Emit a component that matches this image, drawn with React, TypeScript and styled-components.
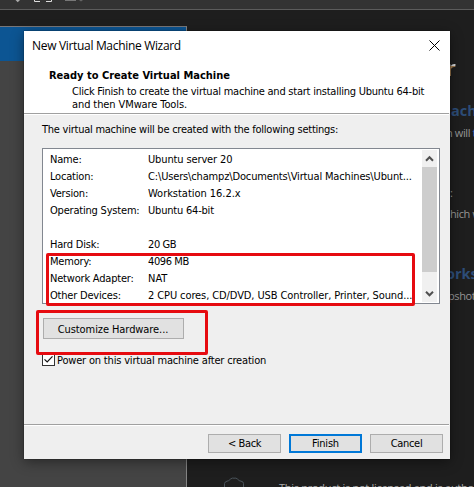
import React from "react";
import styled, { createGlobalStyle } from "styled-components";

const GlobalStyle = createGlobalStyle`
  * { box-sizing: border-box; }
  body { margin: 0; background: #1e1e1e; }
  button { padding: 0; margin: 0; }
`;

const Desktop = styled.div`
  position: relative;
  width: 474px;
  height: 487px;
  overflow: hidden;
  display: flex;
  flex-direction: column;
  background: #1e1e1e;
  font-family: "DejaVu Sans Condensed", "DejaVu Sans", sans-serif;
  font-stretch: condensed;
  font-size: 11px;
  color: #000;
`;

/* Application window behind the dialog */
const Toolbar = styled.div`
  height: 10px;
  flex: none;
  background: #333;
  border-bottom: 1px solid #5c5c5c;
`;
const ToolbarIcons = styled.svg`
  display: block;
`;
const Workspace = styled.div`
  flex: 1;
  min-height: 0;
  display: flex;
  padding-top: 16px;
`;
const Library = styled.div`
  width: 187px;
  background: #444;
  border-top: 1px solid #77777a;
  border-right: 1px solid #858585;
`;
const SelectedItem = styled.div`
  height: 34px;
  background: #0c5593;
`;
const Home = styled.div`
  flex: 1;
  min-width: 0;
  display: flex;
  flex-direction: column;
  justify-content: space-between;
`;
const Actions = styled.div`
  align-self: flex-end;
  width: 24px;
  display: flex;
  flex-direction: column;
`;
const ProductName = styled.div`
  width: 12px;
  height: 38px;
  margin-top: 22px;
  margin-bottom: 11px;
  font: bold 22px/38px "Open Sans", sans-serif;
  text-indent: -4px;
  color: transparent;
  background: linear-gradient(#d8d8d8 0 18px, #a17c50 18px);
  background-clip: text;
`;
const ActionTitle = styled.div<{ $shift: number }>`
  height: 28px;
  font: bold 14.5px/28px "Open Sans", sans-serif;
  text-indent: ${(p) => p.$shift}px;
  white-space: nowrap;
  color: #2d4d78;
`;
const ActionText = styled.div<{ $shift: number; $gap?: number }>`
  height: 16px;
  margin-bottom: ${(p) => p.$gap ?? 0}px;
  font: 11px/16px "Open Sans", sans-serif;
  letter-spacing: -0.4px;
  text-indent: ${(p) => p.$shift}px;
  white-space: nowrap;
  color: #969696;
`;
const Accent = styled.span`
  color: #2f67b5;
`;
const License = styled.div`
  display: flex;
  height: 10px;
  padding-left: 36px;
  gap: 34px;
  overflow: hidden;
  white-space: nowrap;
  font: 11px/15px "Open Sans", sans-serif;
  letter-spacing: -0.28px;
  color: #aaa;
`;
const LicenseText = styled.span`
  margin-top: 3px;
`;
const Seal = styled.svg`
  flex: none;
`;

/* Dialog */
const Dialog = styled.section`
  position: absolute;
  left: 24px;
  top: 31px;
  width: 426px;
  height: 428px;
  display: flex;
  flex-direction: column;
  background: #efefef;
  box-shadow: 0 0 1px rgba(0, 0, 0, 0.7), 0 3px 12px rgba(0, 0, 0, 0.42);
`;
const Header = styled.header`
  height: 82px;
  flex: none;
  background: #fff;
`;
const TitleBar = styled.div`
  display: flex;
  justify-content: space-between;
  height: 38px;
  padding: 5px 10px 0 8px;
`;
const Title = styled.span`
  font: 12px/20px "Open Sans", sans-serif;
  letter-spacing: -0.32px;
`;
const CloseIcon = styled.svg`
  margin-top: 4px;
`;
const Text = styled.span<{ $spacing?: number }>`
  letter-spacing: ${(p) => p.$spacing ?? -0.2}px;
  white-space: nowrap;
`;
const Heading = styled.div`
  padding-left: 25px;
  height: 13px;
  line-height: 13px;
  font-weight: bold;
  color: #000;
`;
const Description = styled.div`
  display: flex;
  flex-direction: column;
  padding: 3px 0 0 48px;
  line-height: 13px;
`;
const Divider = styled.div`
  height: 2px;
  flex: none;
  margin-right: 1px;
  background: #fff;
  border-top: 1px solid #a0a0a0;
`;
const Body = styled.div`
  height: 309px;
  flex: none;
  padding: 6px 10px 0 18px;
`;
const Intro = styled.div`
  height: 27px;
  line-height: 17px;
`;
const SettingsBox = styled.div`
  display: flex;
  justify-content: space-between;
  height: 156px;
  border: 1px solid #828790;
  background: #fff;
  padding: 1px 2px 1px 7px;
`;
const SettingsGrid = styled.div`
  display: grid;
  grid-template-columns: 98px 1fr;
  grid-auto-rows: 17px;
  line-height: 17px;
  padding-top: 1px;
`;
const Scrollbar = styled.div`
  width: 15px;
  display: flex;
  flex-direction: column;
  background: #f0f0f0;
`;
const ScrollArrow = styled.svg`
  flex: none;
`;
const Thumb = styled.div`
  height: 105px;
  background: #cdcdcd;
`;
const Button = styled.button<{ $w: number; $h: number; $primary?: boolean }>`
  display: flex;
  align-items: center;
  justify-content: center;
  width: ${(p) => p.$w}px;
  height: ${(p) => p.$h}px;
  border: ${(p) => (p.$primary ? "2px solid #0078d7" : "1px solid #adadad")};
  border-radius: 0;
  background: #e1e1e1;
  font: inherit;
  line-height: 15px;
  color: #000;
`;
const CustomizeRow = styled.div`
  padding: 14px 0 0 1px;

  ${Button} {
    padding: 2px 1px 0 0;
  }
`;
const CheckRow = styled.label`
  display: flex;
  height: 13px;
  margin-top: 14px;
  gap: 2px;
  line-height: 15px;
`;
const CheckBox = styled.svg`
  flex: none;
`;
const Footer = styled.footer`
  flex: 1;
  display: flex;
  justify-content: flex-end;
  gap: 8px;
  padding: 8px 7px 0 0;
`;
const Highlight = styled.div<{ $x: number; $y: number; $w: number; $h: number }>`
  position: absolute;
  left: ${(p) => p.$x}px;
  top: ${(p) => p.$y}px;
  width: ${(p) => p.$w}px;
  height: ${(p) => p.$h}px;
  border: 3px solid #e60b10;
  border-radius: 2px;
  pointer-events: none;
`;

type Setting = { label: string; value: string; spacing?: number };
const settings: Setting[] = [
  { label: "Name:", value: "Ubuntu server 20", spacing: -0.13 },
  { label: "Location:", value: "C:\\Users\\champz\\Documents\\Virtual Machines\\Ubunt...", spacing: -0.15 },
  { label: "Version:", value: "Workstation 16.2.x", spacing: -0.03 },
  { label: "Operating System:", value: "Ubuntu 64-bit" },
  { label: "", value: "" },
  { label: "Hard Disk:", value: "20 GB", spacing: -0.4 },
  { label: "Memory:", value: "4096 MB", spacing: -0.4 },
  { label: "Network Adapter:", value: "NAT", spacing: 0 },
  { label: "Other Devices:", value: "2 CPU cores, CD/DVD, USB Controller, Printer, Sound...", spacing: -0.1 },
];

export default function App() {
  return (
    <Desktop>
      <GlobalStyle />
      <Toolbar>
        <ToolbarIcons width="100" height="9" viewBox="0 0 100 9" fill="none">
          <path d="M15.5 0H20L17.7 2.3Z" fill="#aaa" />
          <path d="M34.5 0V1.5H40M46 1.5H51.5V0" stroke="#ddd" />
          <path d="M65 .5H76" stroke="#777" />
          <path d="M79 0H83L81 1.5Z" fill="#666" />
        </ToolbarIcons>
      </Toolbar>
      <Workspace>
        <Library>
          <SelectedItem />
        </Library>
        <Home>
          <Actions>
            <ProductName>r</ProductName>
            <ActionTitle $shift={1}>ach</ActionTitle>
            <ActionText $shift={-4} $gap={44}>n will <Accent>t</Accent></ActionText>
            <ActionText $shift={0} $gap={5}>:</ActionText>
            <ActionText $shift={0} $gap={38}>hich w</ActionText>
            <ActionTitle $shift={-4}>orks</ActionTitle>
            <ActionText $shift={-2}>pshot</ActionText>
          </Actions>
          <License>
            <Seal width="22" height="10" viewBox="0 0 22 10" fill="none" stroke="#4a535a">
              <path d="M1.5 10V6.5Q2 4.5 4 4.2Q6 4 7.3 2.2Q9.5 .5 11 1.2Q13 .5 14.7 2.2Q16 4 18 4.2Q20.5 4.5 20.5 6.5V10" />
            </Seal>
            <LicenseText>This product is not licensed and is author</LicenseText>
          </License>
        </Home>
      </Workspace>

      <Dialog>
        <Header>
          <TitleBar>
            <Title>New Virtual Machine Wizard</Title>
            <CloseIcon width="11" height="11" viewBox="0 0 11 11" fill="none" stroke="#000">
              <path d="M.5 .5L10.5 10.5M10.5 .5L.5 10.5" />
            </CloseIcon>
          </TitleBar>
          <Heading>
            <Text $spacing={0}>Ready to Create Virtual Machine</Text>
          </Heading>
          <Description>
            <Text $spacing={-0.23}>
              Click Finish to create the virtual machine and start installing Ubuntu 64-bit
            </Text>
            <Text $spacing={-0.1}>and then VMware Tools.</Text>
          </Description>
        </Header>
        <Divider />
        <Body>
          <Intro>
            <Text $spacing={-0.245}>
              The virtual machine will be created with the following settings:
            </Text>
          </Intro>
          <SettingsBox>
            <SettingsGrid>
              {settings.map((s, i) => (
                <React.Fragment key={i}>
                  <Text>{s.label}</Text>
                  <Text $spacing={s.spacing}>{s.value}</Text>
                </React.Fragment>
              ))}
            </SettingsGrid>
            <Scrollbar>
              <ScrollArrow width="15" height="17" viewBox="0 0 15 17" fill="none" stroke="#505050" strokeWidth="2">
                <path d="M4 10.7L7.5 7.2L11 10.7" />
              </ScrollArrow>
              <Thumb />
              <ScrollArrow width="15" height="30" viewBox="0 0 15 30" fill="none" stroke="#505050" strokeWidth="2">
                <path d="M4 19.8L7.5 23.3L11 19.8" />
              </ScrollArrow>
            </Scrollbar>
          </SettingsBox>
          <CustomizeRow>
            <Button $w={141} $h={21}>
              <Text $spacing={-0.08}>Customize Hardware...</Text>
            </Button>
          </CustomizeRow>
          <CheckRow>
            <CheckBox width="13" height="13" viewBox="0 0 13 13" fill="none">
              <rect x=".5" y=".5" width="12" height="12" fill="#fff" stroke="#333" />
              <path d="M2.5 6.3L5.2 9L10.5 3.3" stroke="#111" strokeWidth="1.2" />
            </CheckBox>
            <Text $spacing={-0.18}>Power on this virtual machine after creation</Text>
          </CheckRow>
        </Body>
        <Divider />
        <Footer>
          <Button $w={73} $h={19}><Text $spacing={-0.4}>&lt; Back</Text></Button>
          <Button $w={73} $h={19} $primary><Text>Finish</Text></Button>
          <Button $w={73} $h={19}><Text $spacing={-0.3}>Cancel</Text></Button>
        </Footer>
      </Dialog>
      <Highlight $x={46} $y={253} $w={369} $h={53} />
      <Highlight $x={36} $y={310} $w={172} $h={45} />
    </Desktop>
  );
}
